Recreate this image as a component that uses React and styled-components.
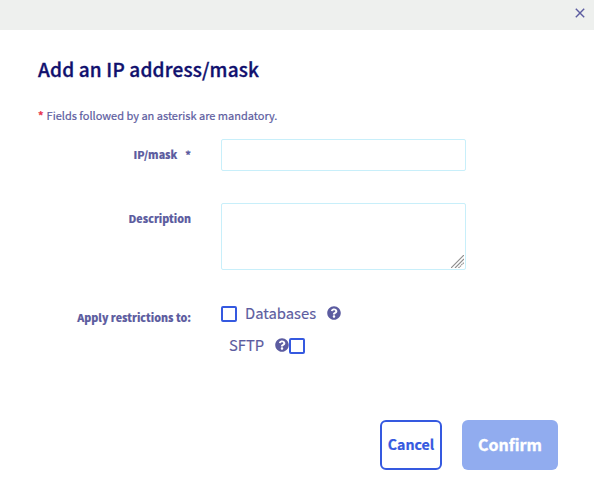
import React from "react";
import styled, { createGlobalStyle } from "styled-components";
import { FaQuestionCircle } from "react-icons/fa";

const GlobalStyle = createGlobalStyle`
  *, *::before, *::after { box-sizing: border-box; }
  body {
    margin: 0;
    background: #fff;
    color: #5c5ca0;
    font-family: "Noto Sans CJK SC", "Noto Sans", sans-serif;
  }
`;

const Dialog = styled.div`
  width: 594px;
  height: 495px;
  overflow: hidden;
  background: #fff;
`;

const TopBar = styled.header`
  display: flex;
  justify-content: flex-end;
  height: 30px;
  padding: 8px 9px 0 0;
  background: #eef0ee;
`;

const CloseButton = styled.button`
  display: flex;
  width: 10px;
  height: 10px;
  padding: 0;
  border: 0;
  background: none;
  color: #5c5ca0;
`;

const Body = styled.form`
  display: flex;
  flex-direction: column;
  padding: 24px 36px 0 38px;
`;

const Title = styled.h1`
  margin: 0;
  font-size: 19px;
  line-height: 30px;
  font-weight: 500;
  letter-spacing: 0.18px;
  -webkit-text-stroke: 0.35px currentColor;
  white-space: nowrap;
  color: #10106e;
`;

const Notice = styled.p`
  margin: 21px 0 14px;
  font-size: 11px;
  line-height: 20px;
  -webkit-text-stroke: 0.2px currentColor;
  white-space: nowrap;
`;

const Mandatory = styled.span`
  margin-right: 3px;
  font-weight: 700;
  color: #e8344e;
`;

const Row = styled.div`
  display: grid;
  grid-template-columns: 153px 245px;
  column-gap: 30px;
  margin-bottom: ${(p) => p.$gap}px;
`;

const Label = styled.label`
  padding-top: ${(p) => p.$top}px;
  font-size: 10.7px;
  line-height: 16px;
  font-weight: 900;
  text-align: right;
  white-space: nowrap;
  -webkit-text-stroke: 0.15px currentColor;
`;

const Star = styled.span`
  margin-left: 8px;
`;

const Input = styled.input`
  height: 32px;
  padding: 0 8px;
  border: 1px solid #c8effa;
  border-radius: 2px;
  outline: 0;
  background: #fff;
`;

const AreaFrame = styled.div`
  position: relative;
  height: 67px;
`;

const TextArea = styled.textarea`
  display: block;
  width: 100%;
  height: 100%;
  padding: 8px;
  border: 1px solid #c8effa;
  border-radius: 2px;
  outline: 0;
  resize: none;
`;

const Grip = styled.svg`
  position: absolute;
  right: 2px;
  bottom: 2px;
`;

const Options = styled.div`
  display: flex;
  flex-direction: column;
`;

const Option = styled.div`
  display: flex;
  align-items: center;
  height: 32px;
  padding-left: ${(p) => p.$indent || 0}px;
`;

const OptionText = styled.span`
  margin: 0 11px 0 ${(p) => p.$left || 0}px;
  padding-bottom: 2px;
  font-size: 14.8px;
  line-height: 20px;
  -webkit-text-stroke: 0.15px currentColor;
  white-space: nowrap;
`;

const Checkbox = styled.input.attrs({ type: "checkbox" })`
  appearance: none;
  flex: none;
  width: 16px;
  height: 16px;
  margin: 0;
  border: 2px solid #3559e0;
  border-radius: 2px;
  background: #fff;
`;

const Help = styled(FaQuestionCircle)`
  flex: none;
  width: 14px;
  height: 14px;
  margin-bottom: 2px;
`;

const Actions = styled.footer`
  display: flex;
  justify-content: flex-end;
  gap: 20px;
`;

const Button = styled.button`
  width: ${(p) => (p.$primary ? 96 : 62)}px;
  height: 50px;
  padding: 0 0 2px;
  border: ${(p) => (p.$primary ? "0" : "2px solid #3559e0")};
  border-radius: 6px;
  background: ${(p) => (p.$primary ? "#91acef" : "#fff")};
  color: ${(p) => (p.$primary ? "#fff" : "#3559e0")};
  font-family: inherit;
  font-size: ${(p) => (p.$primary ? 16 : 14.2)}px;
  line-height: 24px;
  font-weight: 700;
  -webkit-text-stroke: ${(p) => (p.$primary ? 0.35 : 0.2)}px currentColor;
  white-space: nowrap;
`;

export default function App() {
  return (
    <Dialog role="dialog" aria-labelledby="title">
      <GlobalStyle />
      <TopBar>
        <CloseButton aria-label="Close">
          <svg width="10" height="10" viewBox="0 0 10 10" fill="none" stroke="currentColor" strokeWidth="1.4">
            <path d="M.8.8 9.2 9.2M9.2.8.8 9.2" />
          </svg>
        </CloseButton>
      </TopBar>
      <Body onSubmit={(e) => e.preventDefault()}>
        <Title id="title">Add an IP address/mask</Title>
        <Notice>
          <Mandatory>*</Mandatory>Fields followed by an asterisk are mandatory.
        </Notice>
        <Row $gap={32}>
          <Label $top={8} htmlFor="ip">IP/mask<Star>*</Star></Label>
          <Input id="ip" />
        </Row>
        <Row $gap={28}>
          <Label $top={8} htmlFor="description">Description</Label>
          <AreaFrame>
            <TextArea id="description" />
            <Grip width="13" height="13" viewBox="0 0 13 13" stroke="#8f8f8f" strokeWidth="1.2">
              <path d="M0 13 13 0M4 13 13 4" />
              <path d="M7.5 13 13 7.5" strokeDasharray="1.4 .6" />
            </Grip>
          </AreaFrame>
        </Row>
        <Row $gap={58}>
          <Label as="span" $top={12}>Apply restrictions to:</Label>
          <Options>
            <Option>
              <Checkbox id="databases" />
              <OptionText as="label" htmlFor="databases" $left={8}>Databases</OptionText>
              <Help />
            </Option>
            <Option $indent={8}>
              <OptionText as="label" htmlFor="sftp">SFTP</OptionText>
              <Help />
              <Checkbox id="sftp" />
            </Option>
          </Options>
        </Row>
        <Actions>
          <Button type="button">Cancel</Button>
          <Button type="submit" $primary>Confirm</Button>
        </Actions>
      </Body>
    </Dialog>
  );
}
